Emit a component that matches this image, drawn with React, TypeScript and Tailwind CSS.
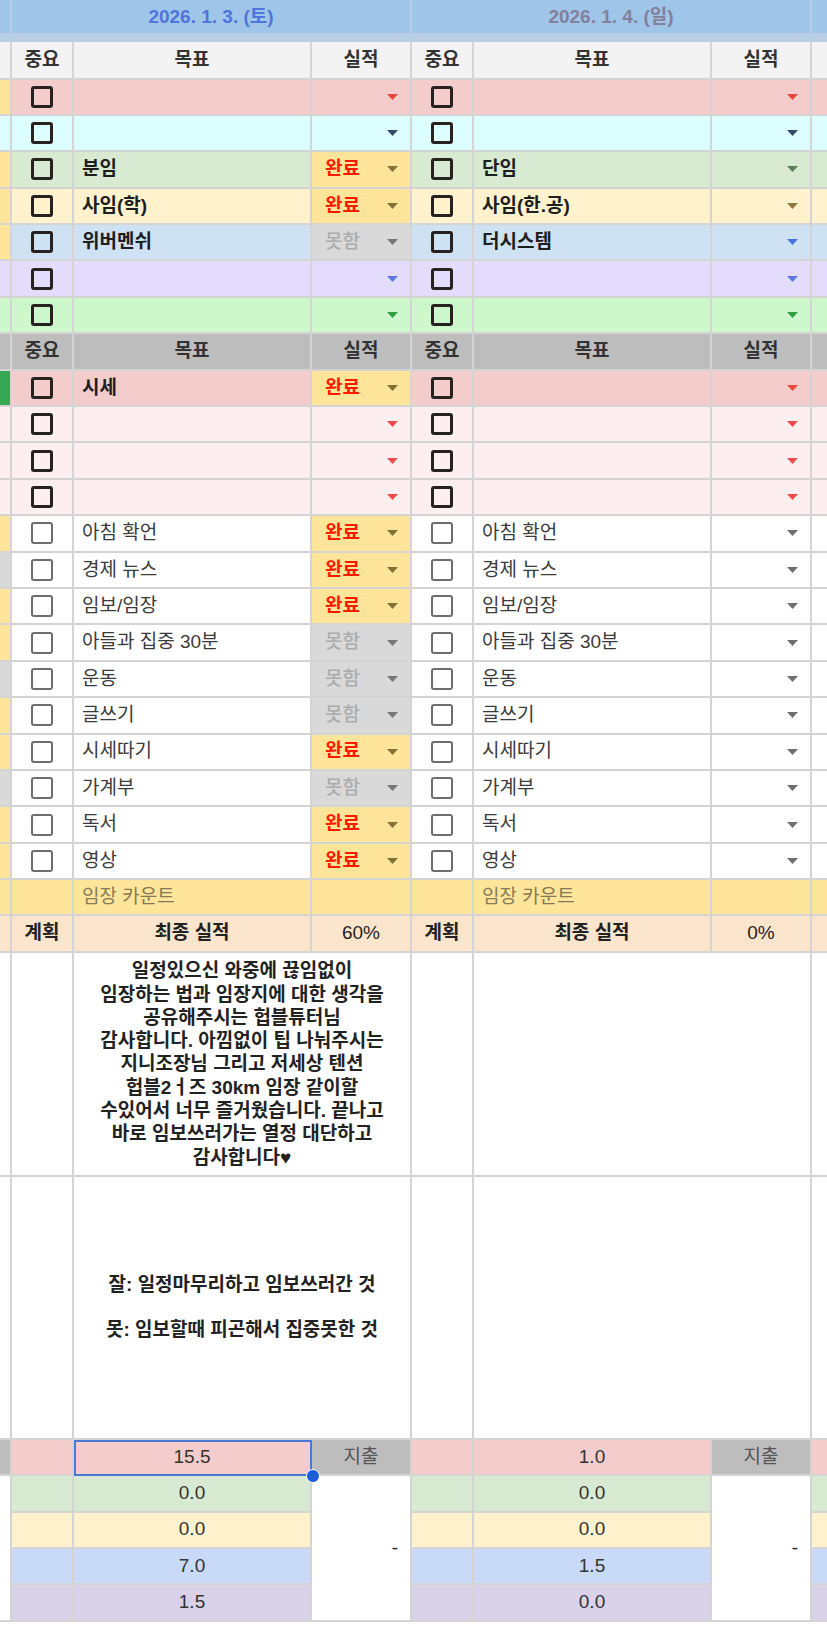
import React from "react";

type Status = "" | "완료" | "못함";
type Slot = [string, Status];

interface GoalRow {
  bg: string;
  strip: string;
  arrow: string;
  heavy: boolean;
  bold: boolean;
  slots: Slot[];
}

const LINE = "border-r-2 border-b-2 border-[#d4d4d4]";
const E: Slot = ["", ""];
const GROUPS = [0, 1, 2];

const topRows: GoalRow[] = [
  { bg: "bg-[#f4cccc]", strip: "bg-[#ffe599]", arrow: "#e8483a", heavy: true, bold: true, slots: [E, E, E] },
  { bg: "bg-[#dcfeff]", strip: "bg-[#dcfeff]", arrow: "#3c4866", heavy: true, bold: true, slots: [E, E, E] },
  { bg: "bg-[#d9ead3]", strip: "bg-[#ffe599]", arrow: "#5e7c5a", heavy: true, bold: true, slots: [["분임", "완료"], ["단임", ""], E] },
  { bg: "bg-[#fff2cc]", strip: "bg-[#ffe599]", arrow: "#8c7b3a", heavy: true, bold: true, slots: [["사임(학)", "완료"], ["사임(한.공)", ""], E] },
  { bg: "bg-[#cfe2f3]", strip: "bg-[#ffe599]", arrow: "#4a74d9", heavy: true, bold: true, slots: [["위버멘쉬", "못함"], ["더시스템", ""], E] },
  { bg: "bg-[#e4dcfc]", strip: "bg-[#e4dcfc]", arrow: "#5d79e0", heavy: true, bold: true, slots: [E, E, E] },
  { bg: "bg-[#ccf8cc]", strip: "bg-[#ccf8cc]", arrow: "#2f9e44", heavy: true, bold: true, slots: [E, E, E] },
];

const midRows: GoalRow[] = [
  { bg: "bg-[#f4cccc]", strip: "bg-[#34a853]", arrow: "#e8483a", heavy: true, bold: true, slots: [["시세", "완료"], E, E] },
  { bg: "bg-[#fdefef]", strip: "bg-[#fdefef]", arrow: "#ef4b4b", heavy: true, bold: true, slots: [E, E, E] },
  { bg: "bg-[#fdefef]", strip: "bg-[#fdefef]", arrow: "#ef4b4b", heavy: true, bold: true, slots: [E, E, E] },
  { bg: "bg-[#fdefef]", strip: "bg-[#fdefef]", arrow: "#ef4b4b", heavy: true, bold: true, slots: [E, E, E] },
];

const routine: [string, Status, string][] = [
  ["아침 확언", "완료", "bg-[#ffe599]"],
  ["경제 뉴스", "완료", "bg-[#d9d9d9]"],
  ["임보/임장", "완료", "bg-[#ffe599]"],
  ["아들과 집중 30분", "못함", "bg-[#ffe599]"],
  ["운동", "못함", "bg-[#d9d9d9]"],
  ["글쓰기", "못함", "bg-[#ffe599]"],
  ["시세따기", "완료", "bg-[#ffe599]"],
  ["가계부", "못함", "bg-[#d9d9d9]"],
  ["독서", "완료", "bg-[#ffe599]"],
  ["영상", "완료", "bg-[#ffe599]"],
];

const routineRows: GoalRow[] = routine.map(([label, st, strip]) => ({
  bg: "bg-white",
  strip,
  arrow: "#6f6f6f",
  heavy: false,
  bold: false,
  slots: [[label, st], [label, ""], E],
}));

const dates = [
  { text: "2026. 1. 3. (토)", color: "text-[#4f74dc]" },
  { text: "2026. 1. 4. (일)", color: "text-[#83809c]" },
  { text: "", color: "text-[#83809c]" },
];

const percents = ["60%", "0%", ""];

const thanks = [
  "일정있으신 와중에 끊임없이",
  "임장하는 법과 임장지에 대한 생각을",
  "공유해주시는 헙블튜터님",
  "감사합니다. 아낌없이 팁 나눠주시는",
  "지니조장님 그리고 저세상 텐션",
  "헙블2ㅓ즈 30km 임장 같이할",
  "수있어서 너무 즐거웠습니다. 끝나고",
  "바로 임보쓰러가는 열정 대단하고",
  "감사합니다♥",
];

const review = ["잘: 일정마무리하고 임보쓰러간 것", "\u00a0", "못: 임보할때 피곤해서 집중못한 것"];

const numRows = [
  { bg: "bg-[#f4cccc]", v: ["15.5", "1.0", ""] },
  { bg: "bg-[#d9ead3]", v: ["0.0", "0.0", ""] },
  { bg: "bg-[#fff2cc]", v: ["0.0", "0.0", ""] },
  { bg: "bg-[#c9daf8]", v: ["7.0", "1.5", ""] },
  { bg: "bg-[#d9d2e9]", v: ["1.5", "0.0", ""] },
];

function Arrow({ color }: { color: string }) {
  return (
    <svg width="11" height="6" viewBox="0 0 11 6" className="shrink-0">
      <path d="M0 0H11L5.5 6Z" fill={color} />
    </svg>
  );
}

function Box({ heavy }: { heavy: boolean }) {
  return (
    <div
      className={
        heavy
          ? "w-[22px] h-[22px] rounded-[3px] border-[3px] border-[#272120]"
          : "w-[22px] h-[22px] rounded-[3px] border-2 border-[#6e6e6e]"
      }
    />
  );
}

function StatusCell({ status, bg, arrow }: { status: Status; bg: string; arrow: string }) {
  let cellBg = bg;
  let arrowColor = arrow;
  if (status === "완료") {
    cellBg = "bg-[#ffe599]";
    arrowColor = "#857235";
  } else if (status === "못함") {
    cellBg = "bg-[#d9d9d9]";
    arrowColor = "#777777";
  }
  return (
    <div className={`${LINE} ${cellBg} flex items-center justify-between pl-[13px] pr-[12px]`}>
      <span className={status === "완료" ? "font-bold text-[#ff1a00]" : "font-medium text-[#ababab]"}>{status}</span>
      <Arrow color={arrowColor} />
    </div>
  );
}

function GoalRows({ rows }: { rows: GoalRow[] }) {
  return (
    <>
      {rows.map((r, i) => (
        <React.Fragment key={i}>
          <div className={`${LINE} ${r.strip}`} />
          {r.slots.map((s, g) => (
            <React.Fragment key={g}>
              <div className={`${LINE} ${r.bg} flex items-center justify-center`}>
                <Box heavy={r.heavy} />
              </div>
              <div
                className={`${LINE} ${r.bg} flex items-center pl-[8px] whitespace-nowrap overflow-hidden ${
                  r.bold ? "font-bold text-[#1e1e1e]" : "text-[#3b3b3b]"
                }`}
              >
                {s[0]}
              </div>
              <StatusCell status={s[1]} bg={r.bg} arrow={r.arrow} />
            </React.Fragment>
          ))}
        </React.Fragment>
      ))}
    </>
  );
}

function HeaderRow({ bg }: { bg: string }) {
  return (
    <>
      <div className={`${LINE} ${bg}`} />
      {GROUPS.map((g) => (
        <React.Fragment key={g}>
          <div className={`${LINE} ${bg} flex items-center justify-center font-bold text-[#333]`}>{g < 2 ? "중요" : ""}</div>
          <div className={`${LINE} ${bg} flex items-center justify-center font-bold text-[#333]`}>{g < 2 ? "목표" : ""}</div>
          <div className={`${LINE} ${bg} flex items-center justify-center font-bold text-[#333]`}>{g < 2 ? "실적" : ""}</div>
        </React.Fragment>
      ))}
    </>
  );
}

export default function App() {
  return (
    <div className="w-[827px] h-[1642px] overflow-hidden bg-white font-['Liberation_Sans','Noto_Sans_CJK_KR',sans-serif] text-[19px] text-[#222]">
      <div className="grid w-max grid-cols-[12px_62px_238px_100px_62px_238px_100px_62px_238px_100px] grid-rows-[33px_9px_37.5px_repeat(24,36.4px)_224.5px_262.4px_repeat(5,36.4px)]">
        {/* date header */}
        <div className="bg-[#9fc5e8] border-r-2 border-[#b5cfec]" />
        {dates.map((d, g) => (
          <div
            key={g}
            className={`col-span-3 bg-[#9fc5e8] border-r-2 border-[#b5cfec] flex items-center justify-center pt-[2px] font-semibold ${d.color}`}
          >
            {d.text}
          </div>
        ))}
        <div className="col-span-full bg-[#bacee5]" />

        <HeaderRow bg="bg-[#f3f3f3]" />
        <GoalRows rows={topRows} />
        <HeaderRow bg="bg-[#bdbdbd]" />
        <GoalRows rows={midRows} />
        <GoalRows rows={routineRows} />

        {/* 임장 카운트 */}
        <div className={`${LINE} bg-[#ffe599]`} />
        {GROUPS.map((g) => (
          <React.Fragment key={g}>
            <div className={`${LINE} bg-[#ffe599]`} />
            <div className={`${LINE} bg-[#ffe599] flex items-center pl-[8px] text-[#857a55]`}>{g < 2 ? "임장 카운트" : ""}</div>
            <div className={`${LINE} bg-[#ffe599]`} />
          </React.Fragment>
        ))}

        {/* 계획 / 최종 실적 */}
        <div className={`${LINE} bg-[#fce5cd]`} />
        {percents.map((p, g) => (
          <React.Fragment key={g}>
            <div className={`${LINE} bg-[#fce5cd] flex items-center justify-center font-bold`}>{g < 2 ? "계획" : ""}</div>
            <div className={`${LINE} bg-[#fce5cd] flex items-center justify-center font-bold`}>{g < 2 ? "최종 실적" : ""}</div>
            <div className={`${LINE} bg-[#fce5cd] flex items-center justify-center`}>{p}</div>
          </React.Fragment>
        ))}

        {/* 감사 메모 */}
        <div className={`${LINE} bg-white`} />
        {GROUPS.map((g) => (
          <React.Fragment key={g}>
            <div className={`${LINE} bg-white`} />
            <div className={`${LINE} col-span-2 bg-white flex flex-col items-center justify-center font-bold leading-[23.3px] whitespace-nowrap`}>
              {g === 0 && thanks.map((t) => <div key={t}>{t}</div>)}
            </div>
          </React.Fragment>
        ))}

        {/* 잘/못 */}
        <div className={`${LINE} bg-white`} />
        {GROUPS.map((g) => (
          <React.Fragment key={g}>
            <div className={`${LINE} bg-white`} />
            <div className={`${LINE} col-span-2 bg-white flex flex-col items-center justify-center font-bold leading-[22.5px] whitespace-nowrap`}>
              {g === 0 && review.map((t, k) => <div key={k}>{t}</div>)}
            </div>
          </React.Fragment>
        ))}

        {/* 지출 */}
        {numRows.map((r, i) => (
          <React.Fragment key={i}>
            {i === 0 && <div className={`${LINE} bg-[#bdbdbd]`} />}
            {i === 1 && <div className={`${LINE} row-span-4 bg-white`} />}
            {r.v.map((v, g) => (
              <React.Fragment key={g}>
                <div className={`${LINE} ${r.bg}`} />
                {i === 0 && g === 0 ? (
                  <div className={`${LINE} ${r.bg} relative z-10 flex items-center justify-center text-[#333]`}>
                    {v}
                    <div className="absolute left-0 top-0 -right-[2px] -bottom-[2px] border-2 border-[#4a78d6]" />
                    <div className="absolute -right-[10px] -bottom-[9px] w-[14px] h-[14px] rounded-full bg-[#1b5fd8] border border-white" />
                  </div>
                ) : (
                  <div className={`${LINE} ${r.bg} flex items-center justify-center text-[#333]`}>{v}</div>
                )}
                {i === 0 && (
                  <div className={`${LINE} bg-[#bdbdbd] flex items-center justify-center text-[#555]`}>{g < 2 ? "지출" : ""}</div>
                )}
                {i === 1 && (
                  <div className={`${LINE} row-span-4 bg-white flex items-center justify-end pr-[12px]`}>{g < 2 ? "-" : ""}</div>
                )}
              </React.Fragment>
            ))}
          </React.Fragment>
        ))}
      </div>
    </div>
  );
}
